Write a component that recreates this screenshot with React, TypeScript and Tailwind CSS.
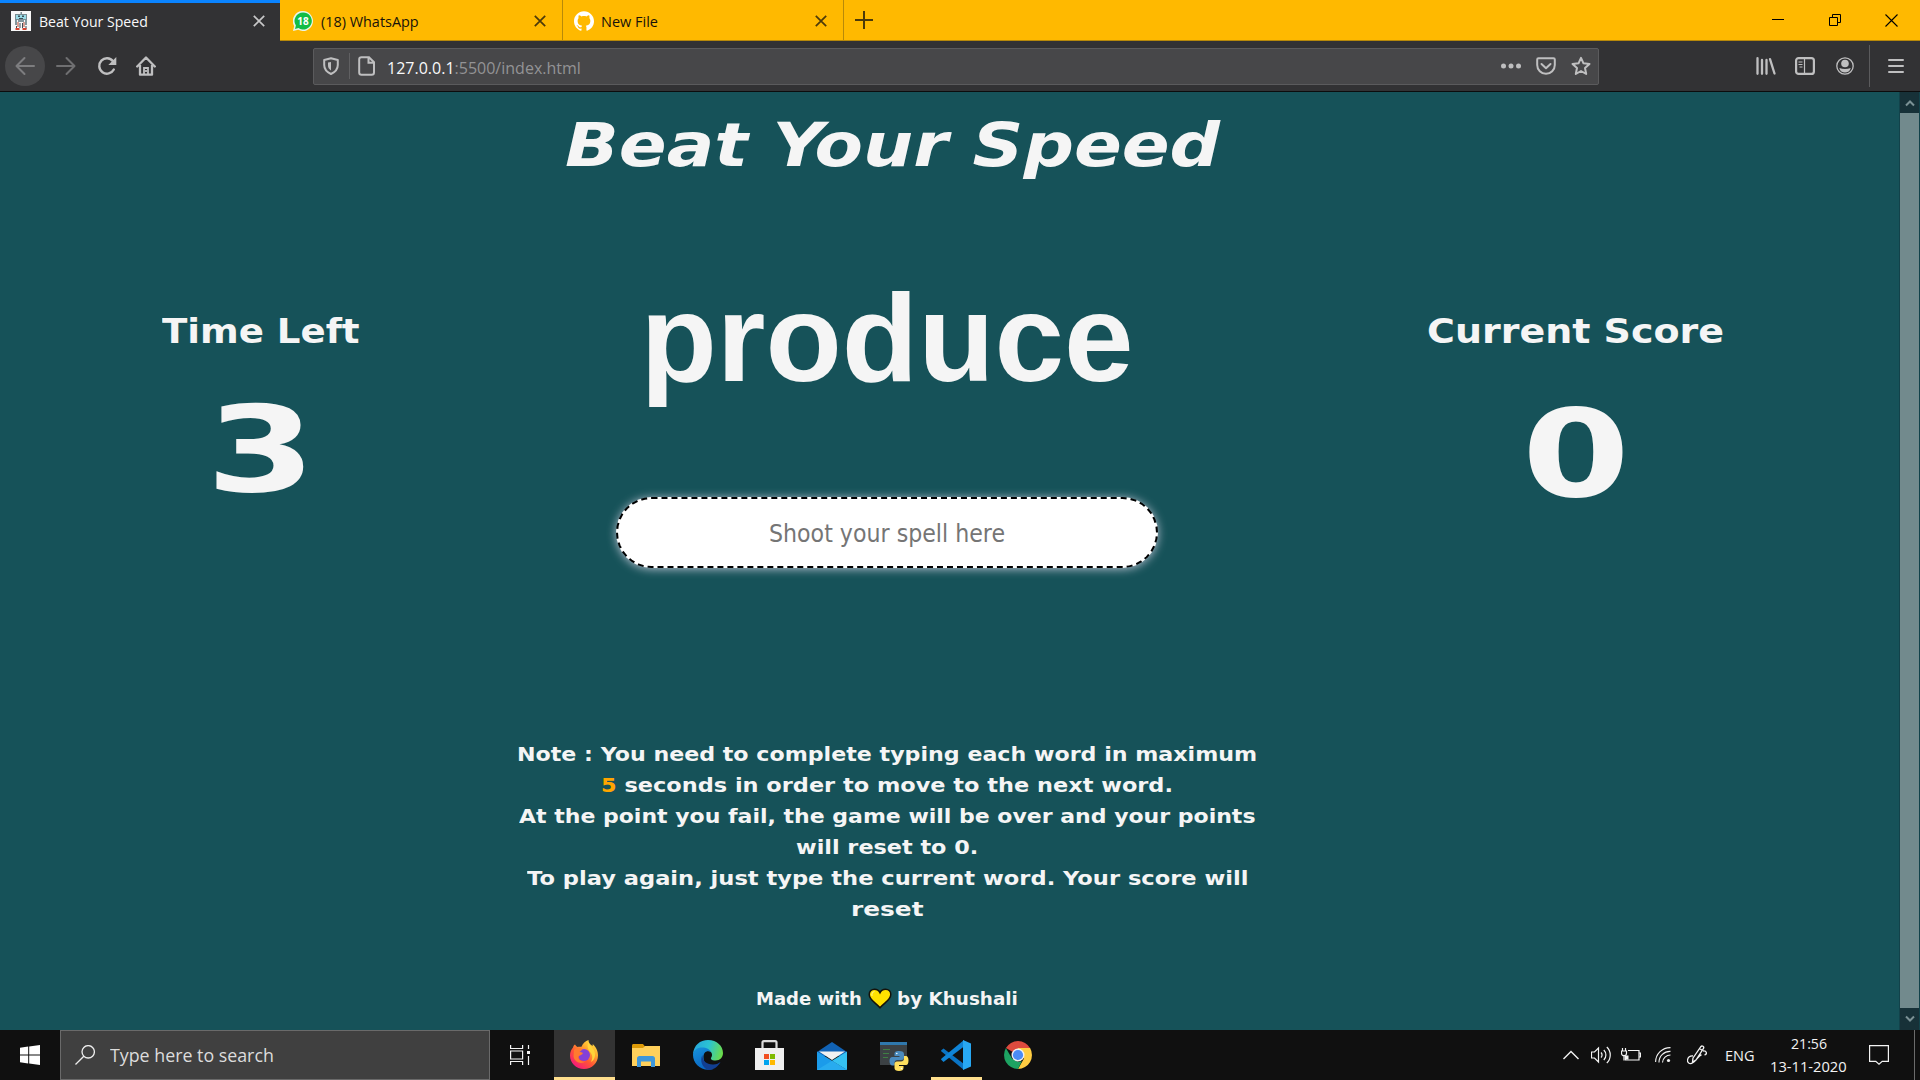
import React, { useLayoutEffect, useRef, useState } from "react";
import { SiGithub } from "react-icons/si";

const UI = "font-['Open_Sans','Noto_Sans',sans-serif]";
const DISPLAY = "font-['DejaVu_Sans',sans-serif] font-bold text-[#f5f5f5]";

/** One line of text stretched horizontally to the width of its box. */
function Fit({ className = "", children }: { className?: string; children: React.ReactNode }) {
  const box = useRef<HTMLDivElement>(null);
  const text = useRef<HTMLSpanElement>(null);
  const [scale, setScale] = useState(1);
  useLayoutEffect(() => {
    if (box.current && text.current) setScale(box.current.clientWidth / text.current.offsetWidth);
  }, []);
  return (
    <div ref={box} className={`shrink-0 whitespace-nowrap ${className}`}>
      <span ref={text} className="inline-block origin-left" style={{ transform: `scaleX(${scale})` }}>
        {children}
      </span>
    </div>
  );
}

function Svg({ className = "", box = "0 0 20 20", children }: { className?: string; box?: string; children: React.ReactNode }) {
  return (
    <svg viewBox={box} className={`shrink-0 ${className}`} fill="none" stroke="currentColor" strokeWidth="2">
      {children}
    </svg>
  );
}

function TabClose({ className = "" }: { className?: string }) {
  return (
    <Svg box="0 0 12 12" className={`size-3 ${className}`}>
      <path d="M.8.8l10.4 10.4M11.2.8L.8 11.2" strokeWidth="1.7" />
    </Svg>
  );
}

function TabBar() {
  return (
    <div className={`flex h-[41px] bg-[#ffb900] text-[15px] leading-[20px] ${UI}`}>
      <div className="flex w-[280px] items-center border-t-[3px] border-[#0a84ff] bg-[#323234] pb-[2px] pl-[11px] text-[#f9f9fa]">
        <svg viewBox="0 0 20 20" className="size-5 shrink-0">
          <path fill="#f8f8f8" d="M0 0h20v20H0z" />
          <path fill="#7b8d93" d="M4 3h12v6H4zM9.500 1h1.500v2H9.500z" />
          <path fill="#9adbe6" d="M5 4h10v4H5z" />
          <path fill="#3b5058" d="M7 4.500h2v1.500H7zM11 4.500h2v1.500h-2zM8 7h4v1H8z" />
          <path fill="#83979d" d="M4 9h2v5H4zM14 9h2v5h-2zM7 9h6v2H7z" />
          <path fill="#d7a196" d="M6 11h2v5H6zM12 11h2v5h-2z" />
          <path fill="#3f4c55" d="M5 15h1v3H5zM8.500 12h1v5h-1zM11 12h1v5h-1zM14.500 15h1v3h-1z" />
          <path fill="#d8432f" d="M4.500 17h4v2h-4zM11.500 17h4v2h-4z" />
        </svg>
        <Fit className="ml-2 w-[109px]">Beat Your Speed</Fit>
        <TabClose className="ml-[105px] text-[#c8c8c9]" />
      </div>
      <div className="flex w-[283px] items-center border-b border-r border-[#b88909] pl-[13px] pt-[2px] text-[#17130a]">
        <svg viewBox="0 0 20 20" className="size-5 shrink-0">
          <path fill="#e8f5e9" d="M10 0a10 10 0 1 1-4.8 18.8L0 20l1.2-5A10 10 0 0 1 10 0z" />
          <path fill="#12bd45" d="M10 1.500A8.500 8.500 0 1 1 5.500 17L2 18l.9-3.400A8.500 8.500 0 0 1 10 1.500z" />
          <text x="10" y="13.600" textAnchor="middle" fill="#fff" stroke="none" className="font-['Open_Sans',sans-serif] text-[10px] font-bold">18</text>
        </svg>
        <Fit className="ml-2 w-[98px]">(18) WhatsApp</Fit>
        <TabClose className="ml-[115px] text-[#4c3a0a]" />
      </div>
      <div className="flex w-[281px] items-center border-b border-r border-[#b88909] pl-[11px] pt-[2px] text-[#17130a]">
        <SiGithub className="size-5 shrink-0 text-white" />
        <Fit className="ml-[7px] w-[57px]">New File</Fit>
        <TabClose className="ml-[157px] text-[#4c3a0a]" />
      </div>
      <div className="flex flex-1 items-center border-b border-[#b88909] pl-[11px] text-black">
        <Svg box="0 0 18 18" className="size-[18px] text-[#4c3a0a]">
          <path d="M9 0v18M0 9h18" />
        </Svg>
        <Svg box="0 0 12 12" className="ml-auto size-3">
          <path d="M0 5.500h12" strokeWidth="1" />
        </Svg>
        <Svg box="0 0 12 12" className="ml-[45px] size-3">
          <path d="M.5 3.500h8v8h-8zM3.500 3.500v-3h8v8h-3" strokeWidth="1" />
        </Svg>
        <Svg box="0 0 13 13" className="ml-[44px] mr-[22px] size-[13px]">
          <path d="M.5.5l12 12M12.500.5l-12 12" strokeWidth="1.100" />
        </Svg>
      </div>
    </div>
  );
}

function Toolbar() {
  return (
    <div className="flex h-[51px] items-center border-b border-[#0c0c0d] bg-[#323234] text-[#bfbfc0]">
      <div className="ml-[5px] grid size-10 shrink-0 place-items-center rounded-full bg-[#474749] text-[#7d7d7f]">
        <Svg className="size-5">
          <path d="M19 10H2M9.500 2L1.500 10l8 8" strokeLinecap="round" strokeLinejoin="round" />
        </Svg>
      </div>
      <Svg className="ml-[11px] size-5 text-[#6f6f71]">
        <path d="M1 10h17M10.500 2l8 8-8 8" strokeLinecap="round" strokeLinejoin="round" />
      </Svg>
      <Svg className="ml-[21px] size-5">
        <path d="M16.800 13.500A7.700 7.700 0 1 1 16 5.200" strokeWidth="2.400" strokeLinecap="round" />
        <path d="M19.300 1v8h-8z" fill="currentColor" stroke="none" />
      </Svg>
      <Svg className="ml-[19px] size-5">
        <path d="M1.200 10.500L10 1.500l8.800 9M4 9v9.700h12V9" strokeWidth="2.300" strokeLinecap="round" strokeLinejoin="round" />
        <path d="M8 18v-6h4v6M10 14v2" strokeWidth="1.800" />
      </Svg>
      <div className="ml-[157px] flex h-[37px] w-[1286px] shrink-0 items-center rounded-[2px] border border-[#5b5b5d] bg-[#474749] pl-[9px]">
        <Svg box="0 0 16 18" className="h-[18px] w-4">
          <path d="M8 1.200L14.800 3v5c0 4-2.500 7-6.800 9C3.700 15 1.200 12 1.200 8V3z" strokeLinejoin="round" />
          <path d="M8 5v8.500C5.800 12 5 10.500 5 8V5.600z" fill="currentColor" stroke="none" />
        </Svg>
        <div className="ml-[10px] h-[26px] w-px bg-[#606062]" />
        <Svg box="0 0 17 20" className="ml-[8px] h-5 w-[17px]">
          <path d="M3.500 1.200H11l5 5v10.300a2.300 2.300 0 0 1-2.300 2.300H3.500a2.300 2.300 0 0 1-2.300-2.300v-13a2.300 2.300 0 0 1 2.300-2.300zM10.500 1.500v5.200H16" />
        </Svg>
        <Fit className={`ml-[12px] mt-[3px] w-[194px] text-[17px] leading-[24px] text-[#939395] ${UI}`}>
          <span className="text-[#f9f9fa]">127.0.0.1</span>:5500/index.html
        </Fit>
        <Svg box="0 0 20 6" className="ml-auto h-[6px] w-5">
          <g fill="currentColor" stroke="none">
            <circle cx="2.500" cy="3" r="2.500" />
            <circle cx="10" cy="3" r="2.500" />
            <circle cx="17.500" cy="3" r="2.500" />
          </g>
        </Svg>
        <Svg box="0 0 20 18" className="ml-[15px] h-[18px] w-5">
          <path d="M2.500 1.200h15c.8 0 1.300.5 1.300 1.300V8a8.800 8.800 0 0 1-17.600 0V2.500c0-.8.5-1.300 1.300-1.300z" />
          <path d="M5.500 7L10 11.200 14.500 7" strokeLinecap="round" strokeLinejoin="round" />
        </Svg>
        <Svg className="ml-[15px] mr-[7px] size-5">
          <path d="M10 1.800l2.500 5.500 6 .7-4.500 4 1.200 6-5.200-3-5.200 3L6 12 1.500 8l6-.7z" strokeLinejoin="round" />
        </Svg>
      </div>
      <Svg box="0 0 20 18" className="ml-auto h-[18px] w-5">
        <path d="M1.500 1.200v15.600M6 3v13.800M10.500 3v13.800M14 2.200l4.500 14.300" strokeWidth="2.300" strokeLinecap="round" />
      </Svg>
      <Svg box="0 0 20 18" className="ml-[19px] h-[18px] w-5">
        <rect x="1.100" y="1.100" width="17.800" height="15.800" rx="2.500" strokeWidth="2.200" />
        <path d="M9.500 1v16M3.500 5h4M3.500 7.500h4M4.500 10h3" strokeWidth="1.200" />
      </Svg>
      <Svg box="0 0 18 18" className="ml-[21px] size-[18px]">
        <circle cx="9" cy="9" r="8.200" strokeWidth="1.300" />
        <circle cx="9" cy="6.500" r="3.800" fill="currentColor" stroke="none" />
        <path d="M3.300 11c3.500 1.200 7.900 1.200 11.400 0-.5 3.200-3.100 4.500-5.700 4.500S3.800 14.200 3.300 11z" fill="currentColor" stroke="none" />
      </Svg>
      <div className="ml-[15px] h-[42px] w-px bg-[#5b5b5d]" />
      <Svg box="0 0 16 16" className="ml-[18px] mr-[16px] size-4">
        <path d="M1 2h14M1 8h14M1 14h14" strokeLinecap="round" />
      </Svg>
    </div>
  );
}

function ScrollBar() {
  return (
    <div className="flex w-[21px] shrink-0 flex-col border-x border-[#12424a] bg-[#173138] text-[#7b9195]">
      <div className="grid h-[21px] place-items-center">
        <Svg box="0 0 10 8" className="h-2 w-[10px]">
          <path d="M1 6.500l4-4 4 4" />
        </Svg>
      </div>
      <div className="flex-1 bg-[#728a8d]" />
      <div className="grid h-[22px] place-items-center">
        <Svg box="0 0 10 8" className="h-2 w-[10px]">
          <path d="M1 1.500l4 4 4-4" />
        </Svg>
      </div>
    </div>
  );
}

function Game() {
  return (
    <main className="flex flex-1 flex-col overflow-hidden">
      <Fit className={`ml-[565px] mt-[18px] w-[655px] text-[60px] italic leading-[70px] ${DISPLAY}`}>Beat Your Speed</Fit>
      <div className="flex h-[486px] shrink-0 items-start">
        <section className="ml-[162px] mt-[130px] flex w-[198px] shrink-0 flex-col items-center">
          <Fit className={`w-[198px] text-[33px] leading-[44px] ${DISPLAY}`}>Time Left</Fit>
          <Fit className={`mt-[26px] w-[110px] text-[119px] leading-[140px] ${DISPLAY}`}>3</Fit>
        </section>
        <section className="ml-[256px] mt-[78px] flex w-[542px] shrink-0 flex-col items-center">
          <Fit className="w-[493px] font-['Liberation_Sans',sans-serif] text-[125px] font-bold leading-[160px] text-[#f5f5f5]">produce</Fit>
          <div className="mt-[79px] flex h-[71px] w-[542px] items-center justify-center rounded-full border-2 border-dashed border-black bg-white shadow-[0_1px_10px_#b9c0cf]">
            <Fit className="w-[236px] font-['DejaVu_Sans',sans-serif] text-[25.500px] leading-[34px] text-[#757575]">Shoot your spell here</Fit>
          </div>
        </section>
        <section className="ml-[269px] mt-[130px] flex w-[297px] shrink-0 flex-col items-center">
          <Fit className={`w-[297px] text-[33px] leading-[44px] ${DISPLAY}`}>Current Score</Fit>
          <Fit className={`mt-[30px] w-[108px] text-[122px] leading-[140px] ${DISPLAY}`}>0</Fit>
        </section>
      </div>
      <div className={`ml-[517px] mt-[73px] flex w-[740px] shrink-0 flex-col items-center text-[20px] leading-[31px] ${DISPLAY}`}>
        <Fit className="w-[740px]">Note : You need to complete typing each word in maximum</Fit>
        <Fit className="w-[572px]"><span className="text-[#ffa500]">5</span> seconds in order to move to the next word.</Fit>
        <Fit className="w-[736px]">At the point you fail, the game will be over and your points</Fit>
        <Fit className="w-[182px]">will reset to 0.</Fit>
        <Fit className="w-[721px]">To play again, just type the current word. Your score will</Fit>
        <Fit className="w-[72px]">reset</Fit>
      </div>
      <footer className={`ml-[756px] mt-[62px] flex shrink-0 items-center text-[17px] leading-[24px] ${DISPLAY}`}>
        <Fit className="w-[106px]">Made with</Fit>
        <svg viewBox="0 0 24 21" className="ml-[6px] mb-[2px] h-[21px] w-6 shrink-0">
          <path d="M12 19.800C8 15 1.200 12 1.200 6.500 1.200 3.300 3.500 1.200 6.500 1.200c2.400 0 4.500 1.300 5.500 3.500 1-2.200 3.100-3.500 5.500-3.500 3 0 5.300 2.100 5.300 5.300C22.800 12 16 15 12 19.800z" fill="#ffe100" stroke="#15120a" strokeWidth="1.500" />
          <path d="M4 8c-.5-2.500.5-4 2.500-4.500" fill="none" stroke="#fff27a" strokeWidth="1.200" />
        </svg>
        <Fit className="ml-[5px] w-[121px]">by Khushali</Fit>
      </footer>
    </main>
  );
}

function FirefoxIcon() {
  return (
    <svg viewBox="0 0 28 29" className="h-[29px] w-7">
      <defs>
        <linearGradient id="ff" x1="1" y1="0" x2=".25" y2="1">
          <stop offset="0" stopColor="#fff44f" />
          <stop offset=".35" stopColor="#ffb02e" />
          <stop offset=".65" stopColor="#ff5634" />
          <stop offset="1" stopColor="#f5157f" />
        </linearGradient>
      </defs>
      <path fill="url(#ff)" d="M5 4.500c.7 1.200 1.500 2 2.500 2.500 1-.3 2.500-.5 4-.2C12.500 3.500 15.500 1 18.500 0c0 3 1.500 4 4 6 .3-.8.300-1.400.2-2C27 8 28 12 28 15.500 28 23 22 29 14 29S0 23 0 15.500C0 12 1.500 9 3 7.500 3.200 6.500 4 5 5 4.500z" />
      <circle cx="14" cy="15" r="6" fill="#8440d8" />
      <path fill="#ff7a2f" d="M4 10c2-2 5-2.500 8-1.200 0 1.500-.8 2.200-2.500 2.700l3.500 1.500c-1 2.500-4 2-4.500 4-.5 3 3.500 5 7 4.500-4 3-11 1-12-5z" />
      <path fill="#ffd43a" d="M18.500 2c1 4 7.500 7 6.500 14-.5 3-2 5-4 6 2-4 1.500-7-.5-9.500C18.500 10 16.500 7 18.500 2z" />
    </svg>
  );
}

function FilesIcon() {
  return (
    <svg viewBox="0 0 28 23" className="h-[23px] w-7">
      <path fill="#dd9a07" d="M0 1.500C0 .7.600 0 1.500 0H11l2 2.500V5H0z" />
      <path fill="#ffd05b" d="M0 4h11l2-2h15v20H0z" />
      <path fill="#3f97da" d="M5 23V14.500c0-1.500 1-2.500 2.500-2.500h13c1.500 0 2.500 1 2.500 2.500V23h-4v-5.500H9V23z" />
    </svg>
  );
}

function EdgeIcon() {
  return (
    <svg viewBox="0 0 30 30" className="size-[30px]">
      <defs>
        <linearGradient id="eg" x1="0" y1=".3" x2="1" y2=".5">
          <stop offset="0" stopColor="#26a6dd" />
          <stop offset=".5" stopColor="#2bc3d2" />
          <stop offset="1" stopColor="#6bdc4a" />
        </linearGradient>
        <linearGradient id="eb" x1="0" y1="0" x2=".5" y2="1">
          <stop offset="0" stopColor="#1793dc" />
          <stop offset="1" stopColor="#0a65c2" />
        </linearGradient>
      </defs>
      <path fill="url(#eg)" d="M0 14C1 5 7 0 15 0c9 0 15 6 15 13 0 4.500-3 7.500-7.500 7.500-4 0-5.500-1.500-4-3.500 1-1.500 1-5-3-6.500C9 8 2 9 0 14z" />
      <path fill="url(#eb)" d="M0 15c0-5 4.500-7.500 9-7.500 4.500 0 8 2 9 4.500-4-2-7.500 0-7.500 5 0 6 4 11 10 12C9 32.500 0 24 0 15z" />
      <path fill="#123f91" d="M9.500 15c-.5 6 5 10 11 9.500 3 0 5.500-1.500 7-2.500C25 27 20 30 15.500 30 9 28 6.500 20 9.500 15z" />
    </svg>
  );
}

function StoreIcon() {
  return (
    <svg viewBox="0 0 29 30" className="h-[30px] w-[29px]">
      <path fill="none" stroke="#dcdcdc" strokeWidth="2.200" d="M7.500 10V2.500c0-.8.500-1.400 1.400-1.400h11.200c.9 0 1.400.6 1.400 1.400V10" />
      <path fill="#f0f0f0" d="M0 8h29v22H0z" />
      <path fill="#f25022" d="M9 14h5v5H9z" />
      <path fill="#7fba00" d="M15 14h5v5h-5z" />
      <path fill="#00a4ef" d="M9 20h5v5H9z" />
      <path fill="#ffb900" d="M15 20h5v5h-5z" />
    </svg>
  );
}

function MailIcon() {
  return (
    <svg viewBox="0 0 30 28" className="h-7 w-[30px]">
      <path fill="#1162b4" d="M0 10L15 0l15 10v4H0z" />
      <path fill="#f1f1f1" d="M2 9.500h26L15 18z" />
      <path fill="#1b9bea" d="M0 9.500L30 28H0z" />
      <path fill="#35c1f1" d="M30 9.500V28L15 18.700z" />
      <path fill="#28abef" d="M15 18.700L30 28H0z" />
    </svg>
  );
}

function PythonIcon() {
  return (
    <svg viewBox="0 0 28 29" className="h-[29px] w-7 overflow-visible">
      <path fill="#3c4144" d="M0 0h27v23H0z" />
      <path fill="#2f78ad" d="M0 0h27v3H0z" />
      <path stroke="#3f7f43" strokeWidth="1.200" d="M3 7.500h7M3 11.500h6M3 15.500h5" />
      <path fill="#4b8bbe" d="M19 9c-3.500 0-4.500 1-4.500 3v2h5v1h-7c-2 0-3 1.500-3 4s1 4.500 3 4.500h2V21c0-2 1.200-3 3-3h4c1.700 0 2.500-1 2.500-2.500V12c0-2-1.500-3-5-3z" />
      <path fill="#ffe05d" d="M24 14v2.500c0 2-1.200 3-3 3h-4c-1.500 0-2.500 1-2.500 2.500v4c0 2 1.500 3 4.500 3s4.500-1 4.500-3v-2h-4.500v-1H26c1.500 0 2.500-1.500 2.500-4.500S27.500 14 26 14z" />
      <circle cx="16.800" cy="11.500" r=".8" fill="#fff" />
      <circle cx="21.500" cy="26.500" r=".8" fill="#fff" />
    </svg>
  );
}

function CodeIcon() {
  return (
    <svg viewBox="0 0 30 30" className="size-[30px]">
      <path fill="#0a74c4" d="M0 10.500l2.500-2L23 24v6L.5 11.500z" />
      <path fill="#0f84d6" d="M0 19.500l2.500 2.500L23 6.500V0L.5 18.500z" />
      <path fill="#28a8f2" d="M22 0l8 3.500v23L22 30z" />
    </svg>
  );
}

function ChromeIcon() {
  return (
    <svg viewBox="0 0 28 28" className="size-7">
      <path fill="#dd4b3e" d="M14 14L1.900 7A14 14 0 0 1 26.100 7z" />
      <path fill="#ffcd42" d="M14 14V7h12.100A14 14 0 0 1 14 28l6-10.500z" />
      <path fill="#1da362" d="M14 28A14 14 0 0 1 1.900 7L8 17.500l6 3.500 3.800-.8z" />
      <circle cx="14" cy="14" r="6.500" fill="#f1f1f1" />
      <circle cx="14" cy="14" r="5.100" fill="#4b8bf5" />
    </svg>
  );
}

function Taskbar() {
  return (
    <div className={`flex h-[50px] shrink-0 bg-[#101010] text-[#f3f3f3] ${UI}`}>
      <div className="grid w-[60px] shrink-0 place-items-center">
        <svg viewBox="0 0 20 20" className="size-5 fill-white">
          <path d="M0 2.800l8.200-1.200v7.900H0zM9.200 1.400L20 0v9.500H9.200zM0 10.500h8.200v7.900L0 17.200zM9.200 10.500H20V20L9.200 18.600z" />
        </svg>
      </div>
      <div className="flex w-[430px] shrink-0 items-center border border-[#6a6a6a] bg-[#404040] pl-[14px]">
        <Svg className="size-5 text-[#ededed]">
          <circle cx="13.200" cy="6.800" r="6.200" strokeWidth="1.300" />
          <path d="M8.800 11.200L.5 19.500" strokeWidth="1.300" />
        </Svg>
        <Fit className="ml-[15px] w-[164px] text-[19px] leading-[26px] text-[#dcdcdc]">Type here to search</Fit>
      </div>
      <div className="flex w-[64px] shrink-0 items-center pl-5">
        <Svg className="size-5">
          <path d="M.6 0v3.500h12V0M.6 20v-3.500h12V20M.6 6h12v8H.6zM18.500 0v4M18.500 11v9" strokeWidth="1.200" />
          <path d="M17 6h3v3h-3z" fill="currentColor" stroke="none" />
        </Svg>
      </div>
      <div className="grid w-[61px] shrink-0 place-items-center border-b-[3px] border-[#ffdf8d] bg-[#333] pr-[2px] pt-[2px]"><FirefoxIcon /></div>
      <div className="grid w-[62px] place-items-center"><FilesIcon /></div>
      <div className="grid w-[62px] place-items-center"><EdgeIcon /></div>
      <div className="grid w-[62px] place-items-center pr-[2px]"><StoreIcon /></div>
      <div className="grid w-[62px] place-items-center pt-[2px]"><MailIcon /></div>
      <div className="grid w-[62px] place-items-center pt-[2px]"><PythonIcon /></div>
      <div className="mx-[-4px] flex w-[70px] justify-center">
        <div className="grid w-[51px] place-items-center border-b-[3px] border-[#ffdf8d] pt-[3px]"><CodeIcon /></div>
      </div>
      <div className="grid w-[62px] place-items-center"><ChromeIcon /></div>
      <div className="ml-auto flex shrink-0 items-center">
        <Svg box="0 0 16 10" className="h-[10px] w-4">
          <path d="M.5 9L8 1.500 15.500 9" strokeWidth="1.400" />
        </Svg>
        <Svg className="ml-3 size-5">
          <path d="M.5 7v6h3l4 4V3l-4 4zM10 7.500a3.500 3.500 0 0 1 0 5M12.800 5a7 7 0 0 1 0 10M15.800 2a11 11 0 0 1 0 16" strokeWidth="1.200" />
        </Svg>
        <Svg box="0 0 20 14" className="ml-[10px] h-[14px] w-5">
          <path d="M7 2.500h11V12H4.500V8M18.500 5h1v4h-1M1.500 0v3M4.500 0v3M.5 3h5v2.200a2.500 2.500 0 0 1-5 0zM3 7.500v5" strokeWidth="1.200" />
          <path d="M5 7.500h2.500v4H5z" fill="currentColor" stroke="none" />
        </Svg>
        <Svg box="0 0 16 16" className="ml-[14px] size-4">
          <path d="M.6 15A14.500 14.500 0 0 1 15.500.6M4 15.500A11 11 0 0 1 15.500 4.400M7.500 15.500a8 8 0 0 1 8-7.500" strokeWidth="1.100" />
          <circle cx="13.500" cy="13.500" r="1.600" fill="currentColor" stroke="none" />
        </Svg>
        <Svg className="ml-4 size-5">
          <path d="M6 13L14 1.500c1-1.300 3.500.2 2.500 1.800L9 15l-3.500 2zM12.500 3.500l3 2M6 11c-6-.5-7 6.500-3.500 7.500 5 1.500 8-8 12-8.500M16 6c4-.5 4.500 3.500 1.500 3.800" strokeWidth="1.300" />
        </Svg>
        <Fit className="ml-[18px] w-[30px] text-[15px] leading-[20px]">ENG</Fit>
        <div className="ml-[15px] flex w-[77px] flex-col items-center text-[14.500px] leading-[23px]">
          <Fit className="w-[36px]">21:56</Fit>
          <Fit className="w-[77px]">13-11-2020</Fit>
        </div>
        <Svg className="ml-[22px] size-5">
          <path d="M.6.600h18.800v15.800h-6.200L10 19.200l-3.200-2.800H.6z" strokeWidth="1.200" />
        </Svg>
        <div className="ml-[25px] mr-[5px] h-[50px] w-px bg-[#6b6b6b]" />
      </div>
    </div>
  );
}

export default function App() {
  return (
    <div className="flex h-[1080px] w-[1920px] flex-col overflow-hidden bg-[#165259]">
      <TabBar />
      <Toolbar />
      <div className="flex h-[938px] shrink-0">
        <Game />
        <ScrollBar />
      </div>
      <Taskbar />
    </div>
  );
}
